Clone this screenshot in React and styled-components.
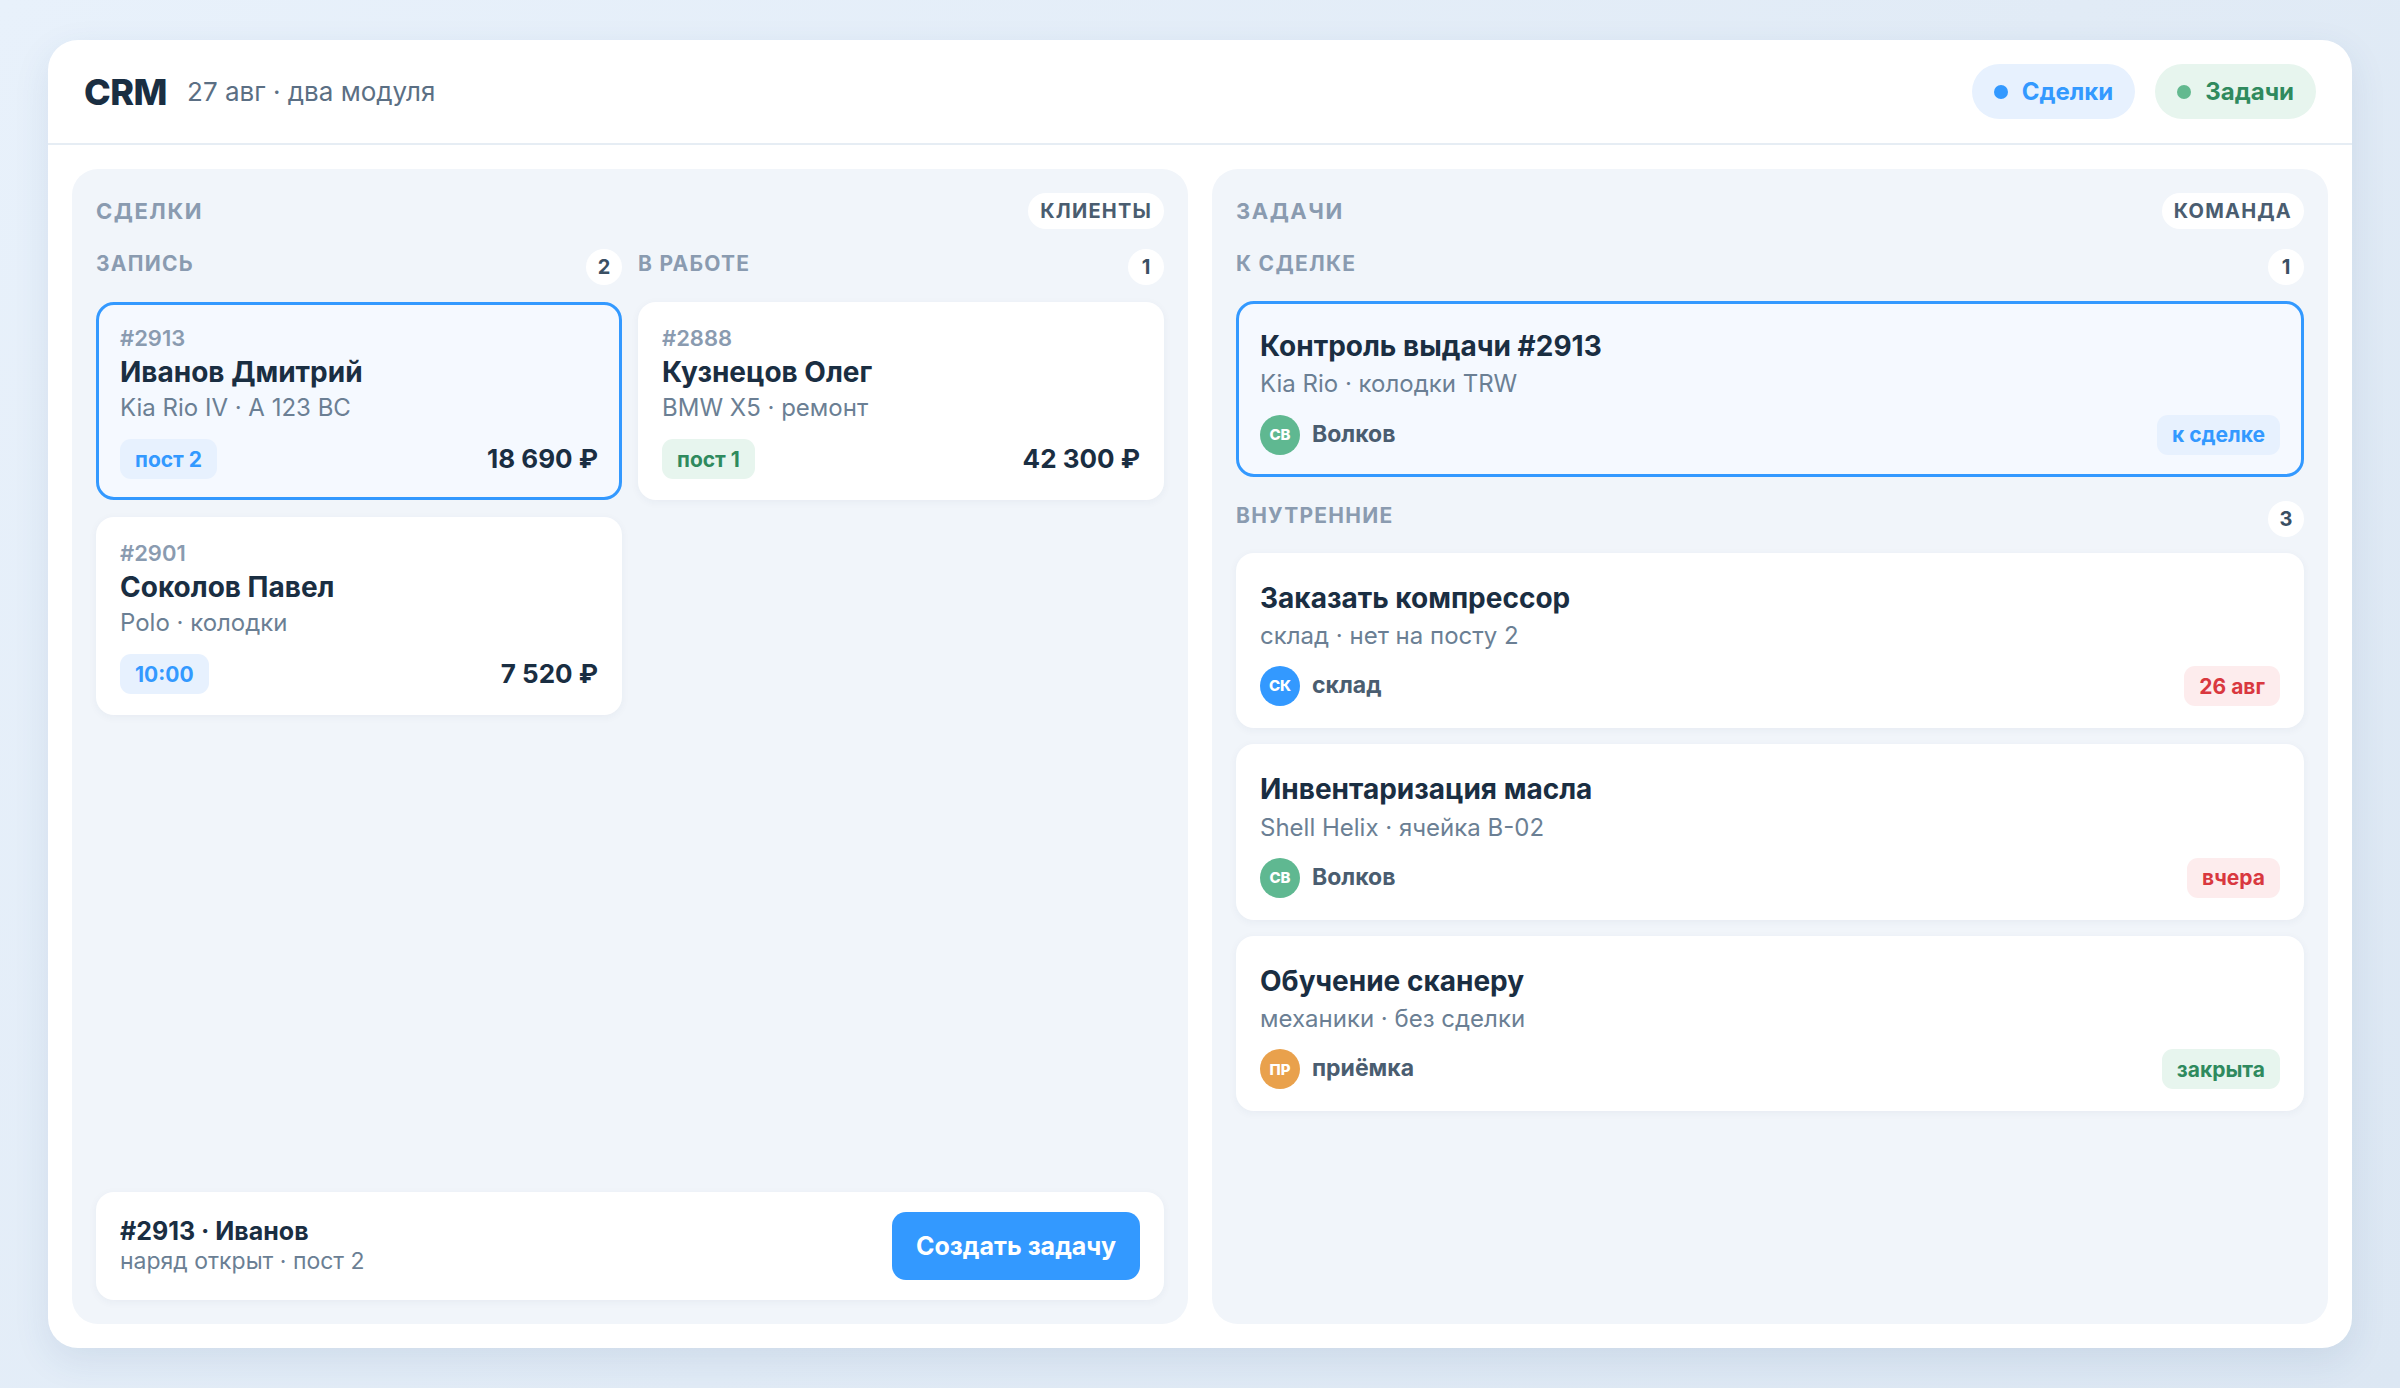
import styled, { createGlobalStyle } from "styled-components";

const GlobalStyle = createGlobalStyle`
  * { box-sizing: border-box; }
  html, body { margin: 0; padding: 0; }
  body {
    font-family: Inter, "Noto Sans", "Liberation Sans", sans-serif;
    background: linear-gradient(135deg, #e8f1fb 0%, #e1ebf6 55%, #dce7f3 100%);
    color: #1a2e42;
  }
`;

const tones = {
  blue: { bg: "#e7f1fe", fg: "#3399ff", dot: "#3399ff" },
  green: { bg: "#e7f5ee", fg: "#2f8a5e", dot: "#63b98f" },
  red: { bg: "#fdeced", fg: "#d9383f", dot: "#d9383f" },
};

const avatarColors = {
  green: "#5fb891",
  blue: "#3399ff",
  orange: "#e9a14c",
};

const Page = styled.div`
  height: 100vh;
  padding: 40px 48px;
`;

const Board = styled.div`
  height: 100%;
  background: #fff;
  border-radius: 30px;
  box-shadow: 0 12px 36px rgba(40, 80, 130, 0.1);
  display: flex;
  flex-direction: column;
  overflow: hidden;
`;

const Header = styled.header`
  height: 105px;
  flex-shrink: 0;
  border-bottom: 2px solid #e6edf4;
  padding: 0 36px;
  display: flex;
  align-items: center;
  justify-content: space-between;
`;

const Brand = styled.div`
  display: flex;
  align-items: center;
  gap: 20px;
`;

const Logo = styled.span`
  font-size: 36px;
  font-weight: 800;
  letter-spacing: -0.5px;
  color: #1a2e42;
`;

const Subtitle = styled.span`
  font-size: 26px;
  color: #5b6f84;
`;

const Pills = styled.div`
  display: flex;
  gap: 20px;
`;

const ModulePill = styled.div`
  height: 55px;
  padding: 0 22px;
  border-radius: 28px;
  display: flex;
  align-items: center;
  gap: 14px;
  font-size: 24px;
  font-weight: 700;
  background: ${(p) => tones[p.$tone].bg};
  color: ${(p) => tones[p.$tone].fg};
`;

const Dot = styled.span`
  width: 14px;
  height: 14px;
  border-radius: 50%;
  background: ${(p) => tones[p.$tone].dot};
`;

const Body = styled.main`
  flex: 1;
  min-height: 0;
  padding: 24px;
  display: grid;
  grid-template-columns: 1fr 1fr;
  gap: 24px;
`;

const Panel = styled.section`
  background: #f1f5fa;
  border-radius: 26px;
  padding: 24px;
  display: flex;
  flex-direction: column;
  min-height: 0;
`;

const PanelHead = styled.div`
  height: 36px;
  display: flex;
  align-items: center;
  justify-content: space-between;
  margin-bottom: 20px;
`;

const PanelTitle = styled.h2`
  margin: 0;
  font-size: 22px;
  font-weight: 700;
  letter-spacing: 0.07em;
  color: #8a9bb0;
`;

const HeadChip = styled.span`
  height: 36px;
  padding: 0 12px;
  border-radius: 18px;
  background: #fff;
  display: flex;
  align-items: center;
  font-size: 20px;
  font-weight: 700;
  letter-spacing: 0.06em;
  color: #4a5d70;
`;

const Columns = styled.div`
  display: grid;
  grid-template-columns: 1fr 1fr;
  gap: 16px;
  align-items: start;
`;

const Column = styled.div`
  display: flex;
  flex-direction: column;
  gap: 17px;
`;

const Section = styled.div`
  display: flex;
  flex-direction: column;
  gap: 16px;
  & + & {
    margin-top: 24px;
  }
`;

const ColumnHead = styled.div`
  height: 36px;
  display: flex;
  align-items: center;
  justify-content: space-between;
`;

const ColumnTitle = styled.h3`
  margin: 0;
  font-size: 21px;
  font-weight: 700;
  letter-spacing: 0.06em;
  color: #8a9bb0;
  align-self: flex-start;
  line-height: 1;
  padding-top: 4px;
`;

const Count = styled.span`
  width: 36px;
  height: 36px;
  border-radius: 50%;
  background: #fff;
  display: flex;
  align-items: center;
  justify-content: center;
  font-size: 20px;
  font-weight: 700;
  color: #3a4f63;
`;

const Card = styled.div`
  border: 3px solid ${(p) => (p.$active ? "#3399ff" : "transparent")};
  background: ${(p) => (p.$active ? "#f5f9ff" : "#fff")};
  border-radius: 18px;
  box-shadow: ${(p) => (p.$active ? "none" : "0 2px 8px rgba(30, 60, 100, 0.05)")};
  padding: ${(p) => (p.$task ? "24px 21px 19px" : "19px 21px 18px")};
  display: flex;
  flex-direction: column;
  line-height: 1.3;
`;

const DealId = styled.span`
  font-size: 22px;
  font-weight: 600;
  color: #8a9bb0;
`;

const Name = styled.span`
  margin-top: ${(p) => (p.$task ? "0" : "1px")};
  font-size: 28px;
  font-weight: 700;
  color: #1a2e42;
`;

const Meta = styled.span`
  margin-top: ${(p) => (p.$task ? "4px" : "2px")};
  font-size: 24px;
  color: #6b7f94;
`;

const CardFoot = styled.div`
  margin-top: ${(p) => (p.$task ? "15px" : "16px")};
  display: flex;
  align-items: center;
  justify-content: space-between;
`;

const Tag = styled.span`
  height: 40px;
  padding: 0 15px;
  border-radius: 11px;
  display: inline-flex;
  align-items: center;
  font-size: 21px;
  font-weight: 700;
  background: ${(p) => tones[p.$tone].bg};
  color: ${(p) => tones[p.$tone].fg};
`;

const Price = styled.span`
  font-size: 26px;
  font-weight: 700;
  color: #1a2e42;
`;

const Owner = styled.div`
  display: flex;
  align-items: center;
  gap: 12px;
  font-size: 23px;
  font-weight: 700;
  color: #4a5d70;
`;

const Avatar = styled.span`
  width: 40px;
  height: 40px;
  border-radius: 50%;
  background: ${(p) => avatarColors[p.$color]};
  color: #fff;
  font-size: 15px;
  font-weight: 800;
  display: flex;
  align-items: center;
  justify-content: center;
`;

const ActionBar = styled.div`
  margin-top: auto;
  background: #fff;
  border-radius: 18px;
  box-shadow: 0 2px 8px rgba(30, 60, 100, 0.05);
  padding: 18px 24px;
  min-height: 108px;
  display: flex;
  align-items: center;
  justify-content: space-between;
  line-height: 1.3;
`;

const ActionText = styled.div`
  display: flex;
  flex-direction: column;
`;

const ActionTitle = styled.span`
  font-size: 25px;
  font-weight: 700;
  color: #1a2e42;
`;

const ActionMeta = styled.span`
  font-size: 23px;
  color: #6b7f94;
`;

const Button = styled.button`
  height: 68px;
  padding: 0 24px;
  border: none;
  border-radius: 14px;
  background: #3399ff;
  color: #fff;
  font-family: inherit;
  font-size: 25px;
  font-weight: 700;
  cursor: pointer;
`;

const dealColumns = [
  {
    title: "ЗАПИСЬ",
    deals: [
      { id: "#2913", name: "Иванов Дмитрий", meta: "Kia Rio IV · A 123 BC", tag: "пост 2", tone: "blue", price: "18 690 ₽", active: true },
      { id: "#2901", name: "Соколов Павел", meta: "Polo · колодки", tag: "10:00", tone: "blue", price: "7 520 ₽" },
    ],
  },
  {
    title: "В РАБОТЕ",
    deals: [
      { id: "#2888", name: "Кузнецов Олег", meta: "BMW X5 · ремонт", tag: "пост 1", tone: "green", price: "42 300 ₽" },
    ],
  },
];

const taskSections = [
  {
    title: "К СДЕЛКЕ",
    tasks: [
      { title: "Контроль выдачи #2913", meta: "Kia Rio · колодки TRW", initials: "СВ", color: "green", owner: "Волков", tag: "к сделке", tone: "blue", active: true },
    ],
  },
  {
    title: "ВНУТРЕННИЕ",
    tasks: [
      { title: "Заказать компрессор", meta: "склад · нет на посту 2", initials: "СК", color: "blue", owner: "склад", tag: "26 авг", tone: "red" },
      { title: "Инвентаризация масла", meta: "Shell Helix · ячейка B-02", initials: "СВ", color: "green", owner: "Волков", tag: "вчера", tone: "red" },
      { title: "Обучение сканеру", meta: "механики · без сделки", initials: "ПР", color: "orange", owner: "приёмка", tag: "закрыта", tone: "green" },
    ],
  },
];

export default function App() {
  return (
    <>
      <GlobalStyle />
      <Page>
        <Board>
          <Header>
            <Brand>
              <Logo>CRM</Logo>
              <Subtitle>27 авг · два модуля</Subtitle>
            </Brand>
            <Pills>
              <ModulePill $tone="blue">
                <Dot $tone="blue" />
                Сделки
              </ModulePill>
              <ModulePill $tone="green">
                <Dot $tone="green" />
                Задачи
              </ModulePill>
            </Pills>
          </Header>

          <Body>
            <Panel>
              <PanelHead>
                <PanelTitle>СДЕЛКИ</PanelTitle>
                <HeadChip>КЛИЕНТЫ</HeadChip>
              </PanelHead>
              <Columns>
                {dealColumns.map((col) => (
                  <Column key={col.title}>
                    <ColumnHead>
                      <ColumnTitle>{col.title}</ColumnTitle>
                      <Count>{col.deals.length}</Count>
                    </ColumnHead>
                    {col.deals.map((d) => (
                      <Card key={d.id} $active={d.active}>
                        <DealId>{d.id}</DealId>
                        <Name>{d.name}</Name>
                        <Meta>{d.meta}</Meta>
                        <CardFoot>
                          <Tag $tone={d.tone}>{d.tag}</Tag>
                          <Price>{d.price}</Price>
                        </CardFoot>
                      </Card>
                    ))}
                  </Column>
                ))}
              </Columns>
              <ActionBar>
                <ActionText>
                  <ActionTitle>#2913 · Иванов</ActionTitle>
                  <ActionMeta>наряд открыт · пост 2</ActionMeta>
                </ActionText>
                <Button>Создать задачу</Button>
              </ActionBar>
            </Panel>

            <Panel>
              <PanelHead>
                <PanelTitle>ЗАДАЧИ</PanelTitle>
                <HeadChip>КОМАНДА</HeadChip>
              </PanelHead>
              {taskSections.map((sec) => (
                <Section key={sec.title}>
                  <ColumnHead>
                    <ColumnTitle>{sec.title}</ColumnTitle>
                    <Count>{sec.tasks.length}</Count>
                  </ColumnHead>
                  {sec.tasks.map((t) => (
                    <Card key={t.title} $task $active={t.active}>
                      <Name $task>{t.title}</Name>
                      <Meta $task>{t.meta}</Meta>
                      <CardFoot $task>
                        <Owner>
                          <Avatar $color={t.color}>{t.initials}</Avatar>
                          {t.owner}
                        </Owner>
                        <Tag $tone={t.tone}>{t.tag}</Tag>
                      </CardFoot>
                    </Card>
                  ))}
                </Section>
              ))}
            </Panel>
          </Body>
        </Board>
      </Page>
    </>
  );
}
